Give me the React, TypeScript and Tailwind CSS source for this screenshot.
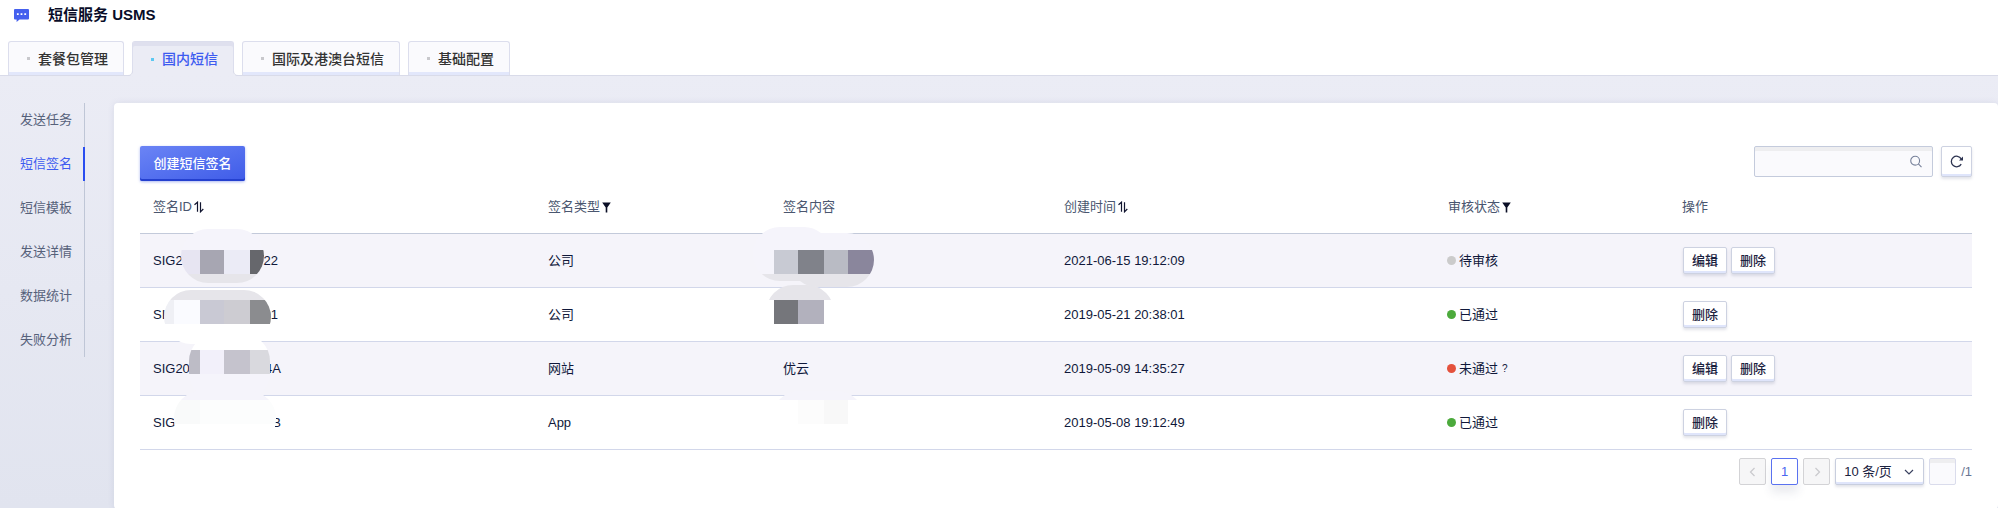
import { useState } from 'react';
import type { ReactNode } from 'react';

const tabs = ['套餐包管理', '国内短信', '国际及港澳台短信', '基础配置'];
const menu = ['发送任务', '短信签名', '短信模板', '发送详情', '数据统计', '失败分析'];

type Status = 'pending' | 'passed' | 'rejected';

interface Signature {
  idStart: string;
  idEnd: string;
  wide: boolean;
  type: string;
  content: string;
  created: string;
  status: Status;
}

const signatures: Signature[] = [
  { idStart: 'SIG2', idEnd: '22', wide: false, type: '公司', content: '', created: '2021-06-15 19:12:09', status: 'pending' },
  { idStart: 'SIG', idEnd: '01', wide: false, type: '公司', content: '', created: '2019-05-21 20:38:01', status: 'passed' },
  { idStart: 'SIG20', idEnd: '4A', wide: true, type: '网站', content: '优云', created: '2019-05-09 14:35:27', status: 'rejected' },
  { idStart: 'SIG', idEnd: 'B', wide: true, type: 'App', content: '', created: '2019-05-08 19:12:49', status: 'passed' },
];

const statusLabel: Record<Status, string> = { pending: '待审核', passed: '已通过', rejected: '未通过' };
const statusColor: Record<Status, string> = {
  pending: 'bg-[#cbcbcb]',
  passed: 'bg-[#4caa3c]',
  rejected: 'bg-[#e4513c]',
};

function ChatLogo() {
  return (
    <svg width="15" height="13" viewBox="0 0 15 13" aria-hidden="true">
      <path d="M1 0h13a1 1 0 0 1 1 1v8.5a1 1 0 0 1-1 1H5.6L2.6 13v-2.5H1a1 1 0 0 1-1-1V1a1 1 0 0 1 1-1z" fill="#4560ee" />
      <path d="M2.9 4.3h1.8v1.8H2.9zM6.6 4.3h1.8v1.8H6.6zM10.3 4.3h1.8v1.8h-1.8z" fill="#fff" />
    </svg>
  );
}

function TabFeet({ fill }: { fill: string }) {
  return (
    <>
      <svg className="absolute bottom-0 -left-[5px]" width="5" height="5" viewBox="0 0 5 5" aria-hidden="true">
        <path d="M5 0v5H0c2.4 0 4.5-2 4.5-5z" fill={fill} />
        <path d="M4.5 0c0 3-2 4.5-4.5 4.5" fill="none" stroke="#d9dbe9" />
      </svg>
      <svg className="absolute -right-[5px] bottom-0" width="5" height="5" viewBox="0 0 5 5" aria-hidden="true">
        <path d="M0 0v5h5C2.600 5 .5 3 .5 0z" fill={fill} />
        <path d="M.5 0c0 3 2 4.500 4.500 4.500" fill="none" stroke="#d9dbe9" />
      </svg>
    </>
  );
}

function SortIcon() {
  return (
    <svg width="10" height="12" viewBox="0 0 10 12" fill="none" stroke="#10142f" strokeWidth="1.2" aria-hidden="true">
      <path d="M.5 3.800 3.500 1.200v9.600M6.500 1.200v9.600L9.300 8" />
    </svg>
  );
}

function FilterIcon() {
  return (
    <svg width="9" height="11" viewBox="0 0 9 11" aria-hidden="true">
      <path d="M.2.600h8.600L5.300 5.600v5H3.700v-5z" fill="#0b0f26" />
    </svg>
  );
}

function SearchIcon() {
  return (
    <svg width="13" height="13" viewBox="0 0 13 13" fill="none" stroke="#76809a" strokeWidth="1.2" aria-hidden="true">
      <circle cx="5.6" cy="5.6" r="4.8" />
      <path d="m9.1 9.1 3.4 3.4" />
    </svg>
  );
}

function RefreshIcon() {
  return (
    <svg width="14" height="13" viewBox="0 0 14 13" fill="none" aria-hidden="true">
      <path d="M11.200 9.200A5.300 5.300 0 1 1 11.200 3.800" stroke="#2c3350" strokeWidth="1.3" />
      <path d="M13 1.400v4.200H9z" fill="#2c3350" />
    </svg>
  );
}

function Chevron({ d, color }: { d: string; color: string }) {
  return (
    <svg width="10" height="10" viewBox="0 0 10 10" fill="none" stroke={color} strokeWidth="1.2" aria-hidden="true">
      <path d={d} />
    </svg>
  );
}

function IdMask() {
  return (
    <svg className="pointer-events-none absolute left-0 -top-[14px]" width="150" height="240" viewBox="140 220 150 240" aria-hidden="true">
      <defs>
        <clipPath id="id-a"><rect x="181" y="229" width="83" height="54" rx="27" /></clipPath>
        <clipPath id="id-b"><rect x="164" y="290" width="107" height="54" rx="27" /></clipPath>
        <clipPath id="id-c"><rect x="189" y="334" width="81" height="66" rx="27" /></clipPath>
        <clipPath id="id-d"><rect x="174" y="391" width="102" height="56" rx="27" /></clipPath>
      </defs>
      <g clipPath="url(#id-a)">
        <path fill="#f5f4fb" d="M181 229h83v21h-83z" />
        <path fill="#e7e5f2" d="M181 250h19v24h-19z" />
        <path fill="#a7a6b2" d="M200 250h24v24h-24z" />
        <path fill="#ebebf6" d="M224 250h26v24h-26z" />
        <path fill="#66676c" d="M250 250h14v24h-14z" />
        <path fill="#e6e5ea" d="M181 274h83v9h-83z" />
      </g>
      <g clipPath="url(#id-b)">
        <path fill="#e6e5ea" d="M164 290h107v10H164z" />
        <path fill="#eff0f5" d="M164 300h10v24h-10z" />
        <path fill="#fafbff" d="M174 300h26v24h-26z" />
        <path fill="#c9c9d4" d="M200 300h24v24h-24z" />
        <path fill="#cdccd2" d="M224 300h26v24h-26z" />
        <path fill="#8b8c8f" d="M250 300h21v24h-21z" />
        <path fill="#fff" d="M164 324h107v20H164z" />
      </g>
      <g clipPath="url(#id-c)">
        <path fill="#fff" d="M189 334h81v16h-81z" />
        <path fill="#bdbcc6" d="M189 350h11v24h-11z" />
        <path fill="#f2f0fa" d="M200 350h24v24h-24z" />
        <path fill="#c5c3cd" d="M224 350h26v24h-26z" />
        <path fill="#d9d9de" d="M250 350h20v24h-20z" />
        <path fill="#f5f4fb" d="M189 374h81v26h-81z" />
      </g>
      <g clipPath="url(#id-d)">
        <path fill="#f5f4fb" d="M174 391h102v9H174z" />
        <path fill="#f9fafa" d="M174 400h26v24h-26z" />
        <path fill="#fcfdfd" d="M200 400h76v24h-76z" />
        <path fill="#fff" d="M174 424h102v23H174z" />
      </g>
    </svg>
  );
}

function ContentMask() {
  return (
    <svg className="pointer-events-none absolute -left-[20px] -top-[14px]" width="150" height="240" viewBox="750 220 150 240" aria-hidden="true">
      <defs>
        <clipPath id="ct-a">
          <rect x="753" y="227" width="78" height="54" rx="27" />
          <rect x="790" y="233" width="84" height="54" rx="27" />
        </clipPath>
        <clipPath id="ct-b"><rect x="766" y="285" width="68" height="54" rx="27" /></clipPath>
        <clipPath id="ct-c"><rect x="772" y="391" width="92" height="54" rx="27" /></clipPath>
      </defs>
      <g clipPath="url(#ct-a)">
        <path fill="#f5f4fb" d="M750 226h130v48H750z" />
        <path fill="#c8cad3" d="M774 250h24v24h-24z" />
        <path fill="#80828a" d="M798 250h26v24h-26z" />
        <path fill="#b9bbc4" d="M824 250h24v24h-24z" />
        <path fill="#8a869c" d="M848 250h26v24h-26z" />
        <path fill="#e6e5ea" d="M750 274h130v14H750z" />
      </g>
      <path clipPath="url(#ct-b)" fill="#e6e5ea" d="M760 285h80v15h-80z" />
      <path fill="#75767b" d="M774 300h24v24h-24z" />
      <path fill="#b2b1bd" d="M798 300h26v24h-26z" />
      <path clipPath="url(#ct-c)" fill="#f5f4fb" d="M770 391h96v9h-96z" />
      <path fill="#fcfcfc" d="M798 400h26v24h-26z" />
      <path fill="#f8f8f8" d="M824 400h24v24h-24z" />
    </svg>
  );
}

function HeadCell({ width, children }: { width: string; children: ReactNode }) {
  return (
    <th className={`${width} h-[53px] border-b border-[#c3cada] px-[13px] text-left font-normal text-[#4a566f]`}>
      <span className="flex items-center gap-[2px]">{children}</span>
    </th>
  );
}

function ActionButton({ children }: { children: ReactNode }) {
  return (
    <button
      type="button"
      className="flex h-[27px] w-11 items-center justify-center rounded-xs border border-[#cdd2e1] bg-white text-[13px] font-medium text-[#1b2240] shadow-[inset_0_-2px_0_#dfe5fb,0_2px_3px_rgba(60,70,110,0.15)]"
    >
      {children}
    </button>
  );
}

export default function App() {
  const [tab, setTab] = useState('国内短信');
  const [item, setItem] = useState('短信签名');

  return (
    <div className="flex min-h-screen flex-col bg-white font-['Liberation_Sans','Noto_Sans_CJK_SC',sans-serif] text-[13px] leading-5 text-[#10183a]">
      <header className="relative z-10">
        <h1 className="flex h-[30px] items-center gap-[19px] pl-[14px] text-[15px] font-bold text-[#080c28]">
          <ChatLogo />
          短信服务 USMS
        </h1>
        <nav className="mt-[11px] flex h-[35px] items-start gap-2 px-2">
          {tabs.map((name) => {
            const active = name === tab;
            return (
              <button
                key={name}
                type="button"
                onClick={() => setTab(name)}
                className={
                  active
                    ? 'relative flex h-[35px] items-center gap-2 rounded-t-[3px] border-x border-t border-[#dcdeed] bg-[#ebecf5] pr-[15px] pl-[18px] text-sm font-medium text-[#3d5bf0] shadow-[inset_0_4px_0_#dfe0ee]'
                    : 'relative flex h-[34px] items-center gap-2 rounded-t-[3px] border-x border-t border-[#dcdeed] bg-[#fafafd] pr-[15px] pl-[18px] text-sm font-medium text-[#333333] shadow-[inset_0_-3px_0_#e2e7fb]'
                }
              >
                <span className={active ? 'size-[3px] bg-[#5cc8f2]' : 'size-[3px] bg-[#c8c8cc]'} />
                {name}
                {active && <TabFeet fill="#ebecf5" />}
              </button>
            );
          })}
        </nav>
      </header>

      <div className="flex grow bg-linear-to-b from-[#ebecf5] to-[#e1e4ef] pt-[27px] shadow-[0_-1px_0_#d9dbe9]">
        <aside className="w-[85px] shrink-0">
          <ul className="flex flex-col gap-[10px] border-r border-[#bfc6d6]">
            {menu.map((name) => (
              <li key={name} className="-mr-px">
                <a
                  href="#"
                  onClick={() => setItem(name)}
                  className={
                    name === item
                      ? 'flex h-[34px] items-center border-r-2 border-[#2a4df0] pl-5 text-[#3d5bf0]'
                      : 'flex h-[34px] items-center pl-5 text-[#56617a]'
                  }
                >
                  {name}
                </a>
              </li>
            ))}
          </ul>
        </aside>

        <main className="ml-[29px] grow rounded-[4px] bg-white pt-[43px] pr-[26px] pb-6 pl-[26px] shadow-[0_0_6px_rgba(90,100,150,0.12)]">
          <div className="flex items-start">
            <button
              type="button"
              className="h-[35px] w-[105px] rounded-xs bg-linear-to-br from-[#6b84f5] to-[#3f5be8] font-medium text-white shadow-[inset_0_-2px_0_#2440cf,0_1px_3px_rgba(50,80,220,0.4)]"
            >
              创建短信签名
            </button>
            <div className="ml-auto flex gap-2">
              <label className="flex h-[31px] w-[179px] items-center rounded-xs border border-[#c4cbdc] bg-[#fafafd] pr-[10px] shadow-[inset_0_4px_0_#eeeef0]">
                <input type="text" aria-label="搜索" className="h-full w-full min-w-0 bg-transparent px-2 outline-none" />
                <SearchIcon />
              </label>
              <button
                type="button"
                aria-label="刷新"
                className="flex size-[31px] items-center justify-center rounded-xs border border-[#cdd2e1] bg-white shadow-[inset_0_-2px_0_#dfe5fb,0_2px_3px_rgba(60,70,110,0.15)]"
              >
                <RefreshIcon />
              </button>
            </div>
          </div>

          <table className="w-full table-fixed border-separate border-spacing-0">
            <thead>
              <tr>
                <HeadCell width="w-[21.56%]">签名ID<SortIcon /></HeadCell>
                <HeadCell width="w-[12.83%]">签名类型<FilterIcon /></HeadCell>
                <HeadCell width="w-[15.34%]">签名内容</HeadCell>
                <HeadCell width="w-[20.96%]">创建时间<SortIcon /></HeadCell>
                <HeadCell width="w-[12.77%]">审核状态<FilterIcon /></HeadCell>
                <HeadCell width="w-[16.54%]">操作</HeadCell>
              </tr>
            </thead>
            <tbody className="[&_td]:h-[54px] [&_td]:border-b [&_td]:border-[#d2d7ea] [&_td]:px-[13px]">
              {signatures.map((row, i) => (
                <tr key={row.created} className="odd:bg-[#f5f4fa]">
                  <td className={i === 0 ? 'relative' : ''}>
                    <span className={row.wide ? 'flex w-32 justify-between' : 'flex w-[125px] justify-between'}>
                      <span>{row.idStart}</span>
                      <span>{row.idEnd}</span>
                    </span>
                    {i === 0 && <IdMask />}
                  </td>
                  <td>{row.type}</td>
                  <td className={i === 0 ? 'relative' : ''}>
                    {row.content}
                    {i === 0 && <ContentMask />}
                  </td>
                  <td>{row.created}</td>
                  <td>
                    <span className="-ml-px flex items-center gap-[3px]">
                      <span className={`size-[9px] rounded-full ${statusColor[row.status]}`} />
                      {statusLabel[row.status]}
                      {row.status === 'rejected' && <span className="ml-px text-[10px]">?</span>}
                    </span>
                  </td>
                  <td>
                    <span className="ml-px flex gap-1">
                      {row.status !== 'passed' && <ActionButton>编辑</ActionButton>}
                      <ActionButton>删除</ActionButton>
                    </span>
                  </td>
                </tr>
              ))}
            </tbody>
          </table>

          <div className="mt-2 flex items-center justify-end gap-[5px]">
            <button type="button" disabled aria-label="上一页" className="flex size-[27px] items-center justify-center rounded-xs border border-[#d3d3d6] bg-[#f6f6f7]">
              <Chevron d="M6.5 1 2.5 5l4 4" color="#c9c9cd" />
            </button>
            <button type="button" className="size-[27px] rounded-xs border border-[#5a72f0] bg-white text-[#4a66f0] shadow-[0_8px_10px_rgba(60,70,110,0.1)]">
              1
            </button>
            <button type="button" disabled aria-label="下一页" className="flex size-[27px] items-center justify-center rounded-xs border border-[#d3d3d6] bg-[#f6f6f7]">
              <Chevron d="m3.5 1 4 4-4 4" color="#c9c9cd" />
            </button>
            <div className="grid items-center">
              <select
                aria-label="每页条数"
                className="col-start-1 row-start-1 h-[27px] w-[89px] appearance-none rounded-xs border border-[#c8cede] bg-white pl-2 text-[#1b2240] shadow-[inset_0_-2px_0_#dfe5fb,0_2px_3px_rgba(60,70,110,0.15)]"
              >
                <option>10 条/页</option>
              </select>
              <span className="pointer-events-none col-start-1 row-start-1 mr-[10px] justify-self-end">
                <Chevron d="m1 3 4 4 4-4" color="#3a4260" />
              </span>
            </div>
            <input
              type="text"
              aria-label="页码"
              className="h-[27px] w-[27px] rounded-xs border border-[#dadcec] bg-[#fafafd] shadow-[inset_0_4px_0_#eeeef0] outline-none"
            />
            <span className="text-[#6b7694]">/1</span>
          </div>
        </main>
      </div>
    </div>
  );
}
